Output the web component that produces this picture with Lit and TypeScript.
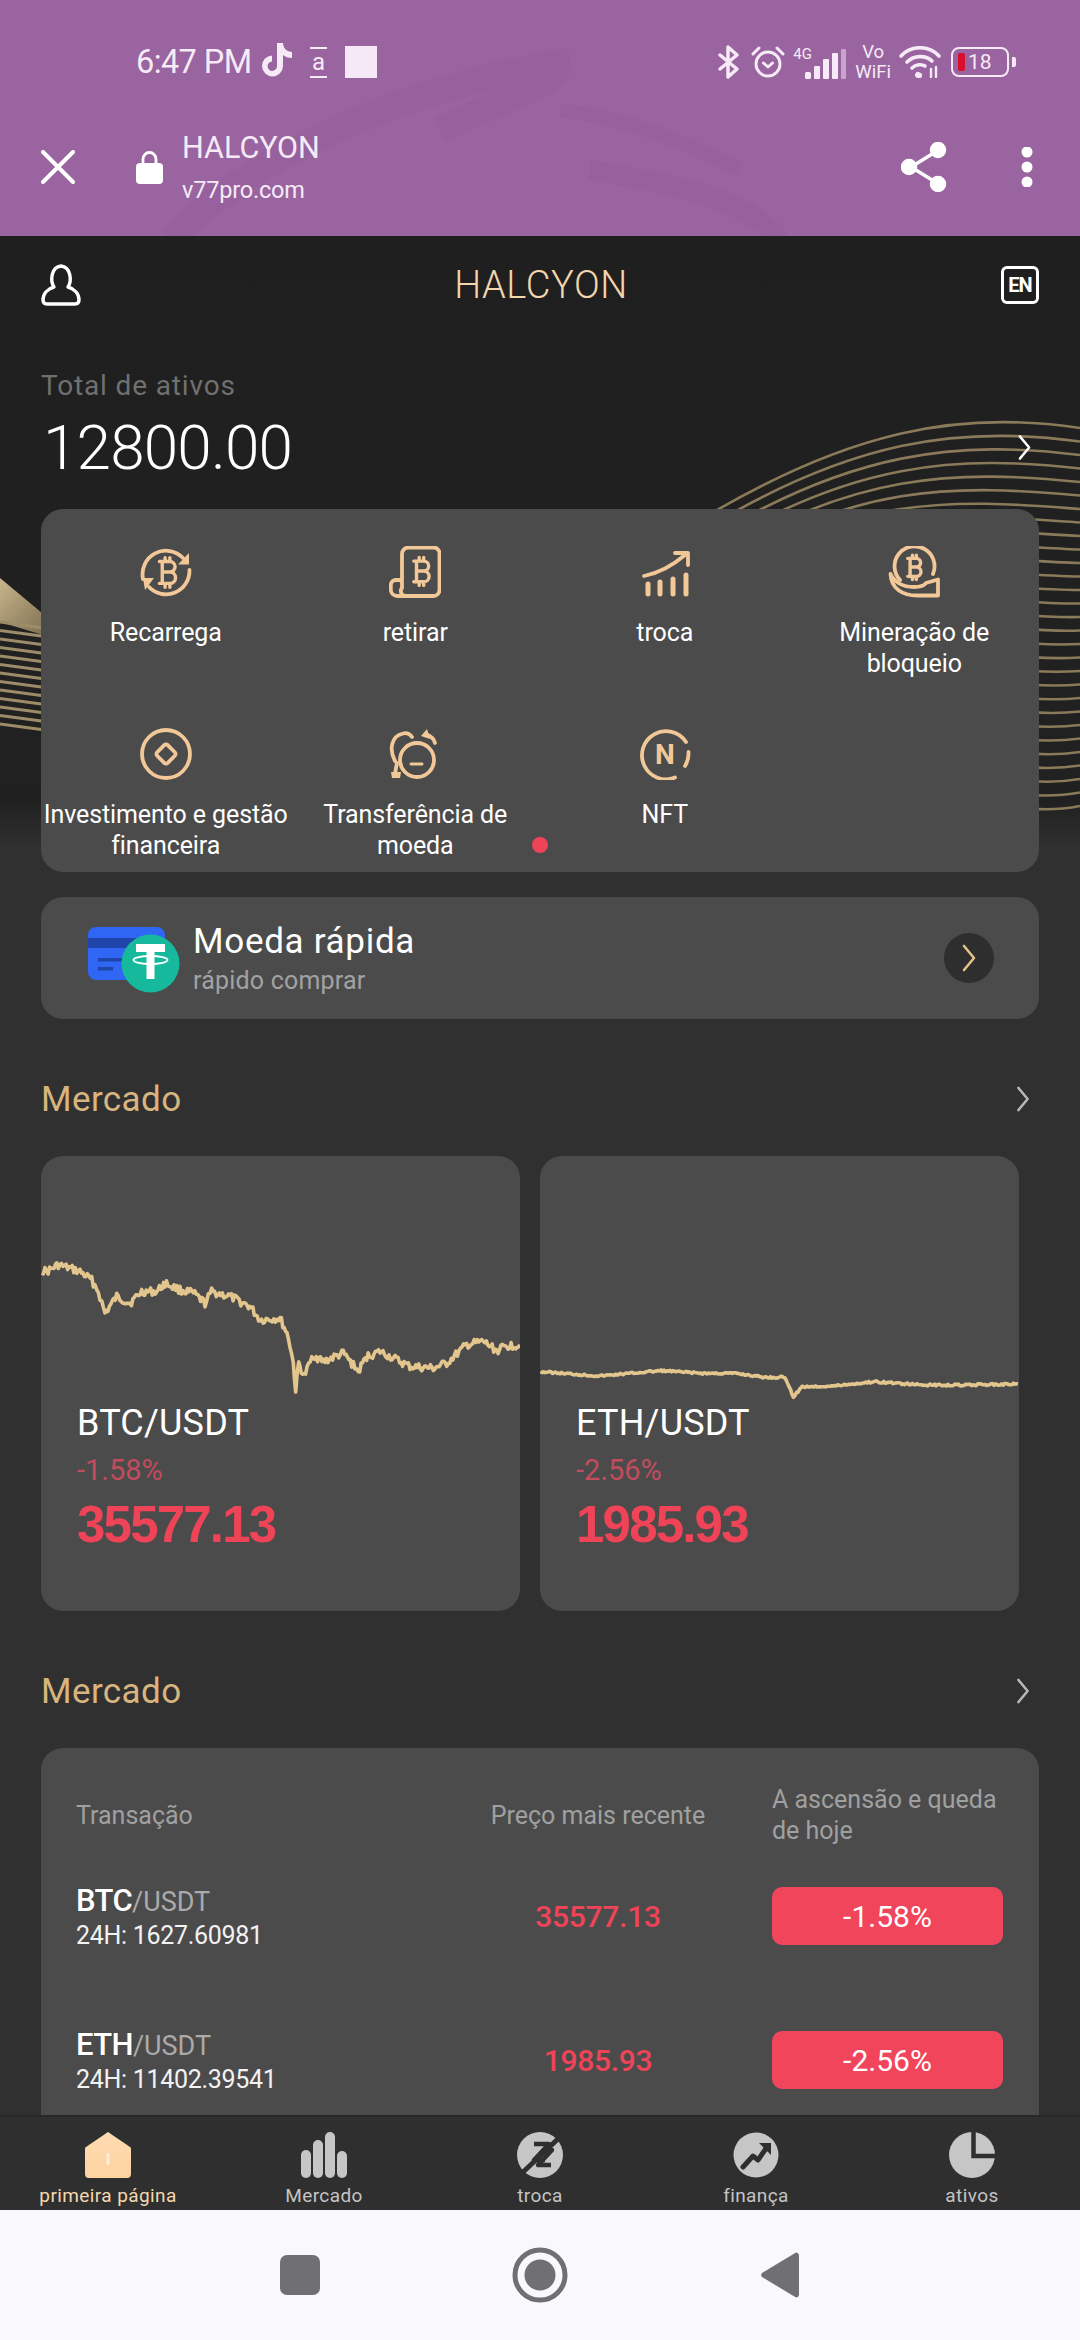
import { LitElement, html, css, svg } from "lit";
import { customElement } from "lit/decorators.js";

const GOLD = "#f2c898";

const btcGlyph = (x: number, y: number, s: number, w = 3.4) => svg`<path transform="translate(${x} ${y}) scale(${s})" fill="none" stroke="${GOLD}" stroke-width="${w / s}" stroke-linecap="round" stroke-linejoin="round" d="M-8 -11H3a5.5 5.5 0 0 1 0 11H-5M3 0a6 6 0 0 1 0 12H-8M-5 -11V12M-2 -15V-11M3 -15V-11M-2 12V16M3 12V16"/>`;

const ic = (body: unknown, size = 52) => html`<svg class="ico" width="${size}" height="${size}" viewBox="0 0 52 52" fill="none" stroke="${GOLD}" stroke-width="3.800" stroke-linecap="round" stroke-linejoin="round">${body}</svg>`;

const ICONS: Record<string, unknown> = {
  recharge: ic(svg`<path d="M43 12A23.5 23.5 0 0 0 3 33"/><path d="M9 41A23.5 23.5 0 0 0 49.500 24"/><path fill="${GOLD}" stroke="none" d="M49 7V18.500H38Z"/><path fill="${GOLD}" stroke="none" d="M3 32H14L5 44Z"/>${btcGlyph(27, 26, 0.95)}`),
  withdraw: ic(svg`<path d="M13 35V8a6.500 6.500 0 0 1 6.500-6.500H44.500A6 6 0 0 1 50.500 8V44a6 6 0 0 1-6 6H8A6.500 6.500 0 0 1 1.800 43.500V39A5 5 0 0 1 7 34H10A3 3 0 0 1 13 37V42a5 5 0 0 0 5 8"/>${btcGlyph(32, 25, 0.9)}`),
  trade: ic(svg`<path d="M5 30C20 27 33 20 46 9"/><path d="M36 7H49V19"/><g stroke-width="5"><path d="M9 38V48"/><path d="M21 36V48"/><path d="M34 33V48"/><path d="M47 29V48"/></g>`),
  mining: ic(svg`<path d="M12 34A20 20 0 1 1 45 28"/><path d="M2.500 28C7 37 15 41 26 41C32 41 36 40 38 37L50 33.500V49.500H31C14 50 3 42 2.500 28Z"/>${btcGlyph(26, 21, 0.78)}`),
  invest: ic(svg`<circle cx="26" cy="26" r="24"/><rect x="18.500" y="18.500" width="15" height="15" rx="2.500" transform="rotate(45 26 26)"/>`),
  transfer: ic(svg`<circle cx="28" cy="32" r="17"/><path d="M22 36H33" stroke-width="3"/><path d="M6 33C0 22 2 8 14 5.500C18 4.500 21 6 23 9"/><path d="M8 35C7 40 6 44 6 48"/><path fill="${GOLD}" stroke="none" d="M2 44H12L11 50H3Z"/><path d="M37 6C42 8 45 11 46 15"/><path fill="${GOLD}" stroke="none" d="M38 1L41 11L32 8Z"/>`),
  nft: html`<svg class="ico" width="52" height="52" viewBox="0 0 52 52" fill="none" stroke="${GOLD}" stroke-width="3.800" stroke-linecap="round"><path d="M36 49.500A24 24 0 1 1 47 14"/><path d="M49.500 24A24 24 0 0 1 46 38"/><text x="26" y="36" text-anchor="middle" font-family="Roboto, sans-serif" font-size="28" font-weight="700" fill="${GOLD}" stroke="none">N</text></svg>`,
};

const GRID = [
  { key: "recharge", label: "Recarrega" },
  { key: "withdraw", label: "retirar" },
  { key: "trade", label: "troca" },
  { key: "mining", label: "Mineração de bloqueio" },
  { key: "invest", label: "Investimento e gestão financeira" },
  { key: "transfer", label: "Transferência de moeda" },
  { key: "nft", label: "NFT" },
];

const BTC_PTS: [number, number][] = [[35,120],[50,125],[85,105],[150,125],[185,150],[205,185],[225,250],[260,200],[300,220],[335,185],[380,185],[405,160],[450,180],[490,190],[525,220],[545,185],[600,200],[660,230],[690,270],[750,265],[775,320],[790,400],[797,482],[806,400],[822,440],[850,375],[880,395],[940,370],[965,400],[985,425],[1010,380],[1050,365],[1100,390],[1140,410],[1210,415],[1250,400],[1310,345],[1360,335],[1400,362],[1430,348],[1470,345]];
const ETH_PTS: [number, number][] = [[785,695],[870,708],[960,692],[1020,700],[1070,700],[1110,712],[1140,712],[1152,770],[1165,740],[1210,738],[1270,725],[1340,735],[1400,735],[1478,732]];

function noisy(pts: [number, number][], amp: number, seed: number) {
  let s = seed;
  const rnd = () => ((s = (s * 9301 + 49297) % 233280) / 233280) - 0.5;
  const out: string[] = [];
  for (let i = 0; i < pts.length - 1; i++) {
    const [x0, y0] = pts[i];
    const [x1, y1] = pts[i + 1];
    const n = Math.max(2, Math.round((x1 - x0) / 1.5));
    for (let k = 0; k < n; k++) {
      const t = k / n;
      out.push(`${(x0 + (x1 - x0) * t).toFixed(1)},${(y0 + (y1 - y0) * t + rnd() * amp).toFixed(1)}`);
    }
  }
  const last = pts[pts.length - 1];
  out.push(`${last[0]},${last[1]}`);
  return out.join(" ");
}

const BTC_LINE = noisy(BTC_PTS.map(([x, y]) => [x / 3 + 30 - 41, y / 3 - 10] as [number, number]), 8, 17);
const ETH_LINE = noisy(ETH_PTS.map(([x, y]) => [x / 1.452 - 540, y / 3 + 1140 - 1240] as [number, number]), 2, 5);

const TILES = [
  { pair: "BTC/USDT", pct: "-1.58%", price: "35577.13", line: BTC_LINE },
  { pair: "ETH/USDT", pct: "-2.56%", price: "1985.93", line: ETH_LINE },
];
const ROWS = [
  { base: "BTC", vol: "24H: 1627.60981", price: "35577.13", pct: "-1.58%" },
  { base: "ETH", vol: "24H: 11402.39541", price: "1985.93", pct: "-2.56%" },
];

const chevron = (color: string, w = 14, h = 28) => html`<svg width="${w}" height="${h}" viewBox="0 0 14 28" fill="none" stroke="${color}" stroke-width="2.600" stroke-linecap="round" stroke-linejoin="round"><path d="M2 2L12 14L2 26"/></svg>`;

const wave = () => {
  const lines = [];
  for (let i = 0; i < 29; i++) {
    lines.push(svg`<path d="M700 ${520 + i * 12}C850 ${430 + i * 10} 960 ${410 + i * 15} 1080 ${428 + i * 13.5}"/>`);
  }
  const left = [];
  for (let i = 0; i < 13; i++) {
    left.push(svg`<path d="M0 ${622 + i * 8.500}L60 ${630 + i * 8.500}"/>`);
  }
  return svg`
    <defs><linearGradient id="wedge" x1="0" y1="0" x2="1" y2="1"><stop offset="0" stop-color="#c9b68a"/><stop offset="1" stop-color="#6e6349"/></linearGradient></defs>
    <g fill="none" stroke="#8a7a5a" stroke-width="2.600">${lines}</g>
    <path d="M0 578L60 628V640L0 622Z" fill="url(#wedge)"/>
    <g fill="none" stroke="#9c8c68" stroke-width="3">${left}</g>`;
};

@customElement("app-root")
export class AppRoot extends LitElement {
  static styles = css`
    :host { display: block; width: 1080px; height: 2340px; overflow: hidden; font-family: Roboto, "Liberation Sans", sans-serif; color: #fff; }
    * { box-sizing: border-box; }
    .screen { width: 1080px; height: 2340px; display: flex; flex-direction: column; position: relative; background: #303030; }
    .chrome { height: 236px; background: #99649f; color: #f6eaf6; flex: none; display: flex; flex-direction: column; position: relative; overflow: hidden; }
    .swoosh { position: absolute; inset: 0; }
    .status { height: 124px; padding: 44px 65px 0 136px; display: flex; align-items: flex-start; justify-content: space-between; position: relative; }
    .st-left, .st-right { display: flex; align-items: center; height: 36px; }
    .time { font-size: 32.500px; letter-spacing: -.6px; width: 126px; white-space: nowrap; }
    .note { width: 48px; }
    .a-box { font-size: 24px; line-height: 25px; border-top: 2px solid #f6eaf6; border-bottom: 2px solid #f6eaf6; height: 31px; width: 17px; display: flex; justify-content: center; align-items: center; margin-right: 18px; }
    .sq { width: 32px; height: 32px; background: #f5e9f6; }
    .st-right svg { display: block; }
    .g4 { font-size: 15px; align-self: flex-start; margin: 2px 0 0 8px; width: 20px; line-height: 16px; }
    .sig { margin-left: -8px; margin-top: 4px; }
    .vo { font-size: 18.500px; font-weight: 400; line-height: 20px; height: 40px; text-align: center; margin: 0 8px; }
    .bat { width: 58px; height: 30px; border: 2.500px solid #f6eaf6; border-radius: 8px; display: flex; align-items: center; padding-left: 5px; font-size: 21px; gap: 3px; position: relative; margin-left: 10px; margin-right: 6px; }
    .bat i { width: 7px; height: 18px; background: #d8102c; border-radius: 2px; }
    .bat::after { content: ""; position: absolute; right: -9px; top: 8px; width: 4px; height: 10px; background: #f6eaf6; border-radius: 0 2px 2px 0; }
    .bar { display: flex; align-items: center; padding: 0 47px 0 41px; height: 90px; position: relative; margin-top: -2px; }
    .lock { margin-left: 61px; margin-right: 19px; }
    .site { flex: 1; display: flex; flex-direction: column; }
    .site b { font-weight: 400; font-size: 30.500px; line-height: 38px; }
    .site span { font-size: 23.500px; line-height: 30px; margin-top: 8px; letter-spacing: -.2px; }
    .share { margin-right: 74px; }

    .content { flex: 1; min-height: 0; overflow: hidden; position: relative; padding: 0 41px; background: linear-gradient(#1f1f1f 0, #212121 540px, #202020 565px, #303030 610px); }
    .deco { position: absolute; left: 0; top: -236px; pointer-events: none; }
    .head { height: 88px; padding-top: 10px; display: flex; align-items: center; justify-content: space-between; position: relative; }
    .head h1 { margin: 0; font-weight: 300; font-size: 38px; color: #f3d6ab; letter-spacing: .6px; }
    .en { width: 38px; height: 38px; border: 3px solid #fff; border-radius: 6px; display: flex; align-items: center; justify-content: center; font-size: 20px; font-weight: 700; letter-spacing: -1px; }
    .total { position: relative; padding-top: 45px; }
    .total small { display: block; font-size: 28px; line-height: 34px; color: #707070; letter-spacing: .85px; }
    .total-row { display: flex; align-items: center; justify-content: space-between; margin-top: 12px; height: 64px; padding-right: 8px; }
    .total-row span { font-size: 62px; font-weight: 300; letter-spacing: -.8px; margin-left: 2px; }

    .panel { position: relative; background: #4b4b4b; border-radius: 22px; }
    .menu { margin-top: 30px; height: 363px; display: grid; grid-template-columns: repeat(4, 1fr); grid-template-rows: 182px 1fr; padding-top: 37px; }
    .cell { display: flex; flex-direction: column; align-items: center; text-align: center; font-size: 25px; line-height: 31px; font-weight: 400; }
    .cell span { margin-top: 19px; padding: 0 1px; width: 100%; letter-spacing: -.1px; }
    .cell .wrap { padding: 0 28px; }
    .ico { display: block; flex: none; }
    .dot { position: absolute; left: 491px; top: 328px; width: 16px; height: 16px; border-radius: 50%; background: #ef4458; }

    .quick { margin-top: 25px; height: 122px; display: flex; align-items: center; padding: 0 45px 0 47px; }
    .quick-art { width: 92px; height: 66px; position: relative; flex: none; margin-top: 3px; }
    .quick-text { flex: 1; margin-left: 13px; }
    .quick-text b { display: block; font-weight: 400; font-size: 35px; line-height: 44px; letter-spacing: .7px; }
    .quick-text span { display: block; font-size: 25px; font-weight: 400; line-height: 30px; color: #a2a2a2; letter-spacing: .2px; margin-top: 2px; }
    .go { width: 50px; height: 50px; border-radius: 50%; background: #2e2e2e; display: flex; align-items: center; justify-content: center; }

    .sec { height: 60px; display: flex; align-items: center; justify-content: space-between; color: #d8b47e; font-size: 35px; font-weight: 400; letter-spacing: .4px; padding-right: 9px; }
    .sec.one { margin-top: 50px; }
    .sec.two { margin-top: 50px; }
    .tiles { display: flex; gap: 20px; margin-top: 27px; }
    .tile { width: 479px; height: 455px; padding-top: 84px; background: #4b4b4b; border-radius: 22px; overflow: hidden; flex: none; }
    .tile svg { display: block; }
    .tile-text { padding: 0 36px; margin-top: 0; }
    .tile-text b { display: block; font-weight: 400; font-size: 36px; line-height: 42px; margin-top: 2px; letter-spacing: .2px; }
    .tile-text i { display: block; font-style: normal; font-size: 29px; font-weight: 400; line-height: 36px; color: #c24c5e; margin-top: 8px; }
    .tile-text strong { display: block; font-family: "Liberation Sans", sans-serif; font-size: 51px; line-height: 58px; font-weight: 700; color: #ef4458; margin-top: 8px; letter-spacing: -1.800px; }

    .table { margin-top: 27px; padding: 25px 35px 40px 35px; }
    .tr { display: grid; grid-template-columns: 396px 300px 231px; align-items: center; }
    .tr > div:nth-child(2) { padding-right: 48px; text-align: center; }
    .th { height: 84px; color: #a0a0a0; font-size: 25px; line-height: 31px; font-weight: 400; }
    .td { height: 72px; margin-top: 72px; }
    .th + .td { margin-top: 23px; }
    .pair { font-size: 31px; line-height: 38px; font-weight: 500; letter-spacing: -.6px; }
    .pair span { font-size: 27px; font-weight: 400; color: #aaa; letter-spacing: 0; }
    .vol { font-size: 25px; line-height: 30px; font-weight: 400; color: #f2f2f2; letter-spacing: -.3px; }
    .px { color: #ef4458; font-size: 30px; font-weight: 500; letter-spacing: -.3px; }
    .pill { height: 58px; border-radius: 10px; background: #f0455a; display: flex; align-items: center; justify-content: center; font-size: 30px; font-weight: 400; }

    .tabs { height: 95px; flex: none; background: #2f2f2f; border-top: 2px solid #272727; display: grid; grid-template-columns: repeat(5, 1fr); padding-top: 14px; position: relative; }
    .tab { display: flex; flex-direction: column; align-items: center; font-size: 19px; font-weight: 400; color: #c4c4c4; letter-spacing: .4px; }
    .tab svg { display: block; }
    .tab span { line-height: 24px; margin-top: 5px; }
    .tab.on { color: #f4d8ae; }
    .sys { height: 130px; flex: none; background: #f9f9fd; display: flex; align-items: center; justify-content: center; }
    .sys div { width: 258px; display: flex; justify-content: center; }
    .sys div.mid { width: 222px; }
  `;

  private tabIcon(i: number) {
    const c = "#c6c6c6";
    const d = "#2f2f2f";
    if (i === 0) return html`<svg width="48" height="48" viewBox="0 0 48 48"><defs><linearGradient id="hm" x1="0" y1="0" x2="0" y2="1"><stop offset="0" stop-color="#ffdcb2"/><stop offset="1" stop-color="#fdd3a0"/></linearGradient></defs><path fill="url(#hm)" d="M24 1L46 16a2 2 0 0 1 1 2V43a4 4 0 0 1-4 4H5a4 4 0 0 1-4-4V18a2 2 0 0 1 1-2Z"/><rect x="22.500" y="22" width="3" height="12" rx="1.500" fill="#ffeeda"/></svg>`;
    if (i === 1) return html`<svg width="48" height="48" viewBox="0 0 48 48" fill="${c}"><rect x="1" y="19" width="10" height="28" rx="5"/><rect x="13" y="9" width="10" height="38" rx="5"/><rect x="25" y="1" width="10" height="46" rx="5"/><rect x="37" y="20" width="10" height="27" rx="5"/></svg>`;
    if (i === 2) return html`<svg width="48" height="48" viewBox="0 0 48 48"><circle cx="24" cy="24" r="23" fill="${c}"/><path d="M4 44L45 5" stroke="${d}" stroke-width="5"/><path d="M18 13H33L18 29H29M29 19L36 19L22 34H35" fill="none" stroke="${d}" stroke-width="4.500" stroke-linejoin="round"/></svg>`;
    if (i === 3) return html`<svg width="48" height="48" viewBox="0 0 48 48"><circle cx="24" cy="24" r="22.500" fill="${c}"/><path d="M11 36L21 25L26 29L35 16" fill="none" stroke="${d}" stroke-width="5" stroke-linecap="round" stroke-linejoin="round"/><path d="M27 12H39V24Z" fill="${d}"/></svg>`;
    return html`<svg width="48" height="48" viewBox="0 0 48 48"><circle cx="24" cy="24" r="23" fill="${c}"/><path d="M24 0V24H48" fill="none" stroke="${d}" stroke-width="4.500" transform="translate(1.500 1)"/></svg>`;
  }

  render() {
    const tabs = ["primeira página", "Mercado", "troca", "finança", "ativos"];
    return html`
      <div class="screen">
        <div class="chrome">
          <svg class="swoosh" width="1080" height="236" viewBox="0 0 1080 236" fill="none" stroke="#96619c" stroke-width="26"><path d="M170 240C260 150 400 90 570 60"/><path d="M440 130C500 100 540 90 560 70"/><path d="M590 170C680 185 750 200 780 240" stroke-width="20"/><path d="M560 110C640 120 700 150 740 170" stroke-width="14"/></svg>
          <div class="status">
            <div class="st-left">
              <span class="time">6:47 PM</span>
              <div class="note"><svg width="30" height="34" viewBox="0 0 30 34" fill="#f6eaf6"><path d="M15 0H21C21 5 25 9 30 9V15C26 15 23.500 14 21 12V23A10.500 10.500 0 1 1 10 12.500V18.500A4.700 4.700 0 1 0 15 23Z"/></svg></div>
              <div class="a-box">a</div>
              <div class="sq"></div>
            </div>
            <div class="st-right">
              <svg width="24" height="34" viewBox="0 0 24 34" fill="none" stroke="#f6eaf6" stroke-width="3.500" stroke-linejoin="round" stroke-linecap="round"><path d="M3 10L20 24L11 32V2L20 10L3 24"/></svg>
              <svg style="margin-left:10px" width="34" height="34" viewBox="0 0 34 34" fill="none" stroke="#f6eaf6" stroke-width="3" stroke-linecap="round" stroke-linejoin="round"><circle cx="17" cy="19" r="12"/><path d="M12.500 18L17 22L21.500 18"/><path d="M2 9L8 3"/><path d="M32 9L26 3"/></svg>
              <span class="g4">4G</span>
              <svg class="sig" width="42" height="32" viewBox="0 0 42 32"><g fill="#f6eaf6"><rect x="0" y="24" width="6" height="7" rx="1.500"/><rect x="9" y="18" width="6" height="13" rx="1"/><rect x="18" y="11" width="6" height="20" rx="1"/><rect x="27" y="5" width="6" height="26" rx="1"/></g><rect x="36" y="1" width="5" height="30" rx="1" fill="#c9a5cd"/></svg>
              <div class="vo">Vo<br />WiFi</div>
              <svg width="42" height="32" viewBox="0 0 42 32" fill="none" stroke="#f6eaf6" stroke-width="3.600" stroke-linecap="round"><path d="M2 10C12 -1 30 -1 40 10"/><path d="M8 16C15 9 27 9 33 15"/><path d="M13 22C17 18 23 18 26 20"/><path d="M19 29L20 29.500" stroke-width="6"/><path d="M32 23V31M37 21V31" stroke-width="2.400"/></svg>
              <div class="bat"><i></i>18</div>
            </div>
          </div>
          <div class="bar">
            <svg width="34" height="34" viewBox="0 0 34 34" fill="none" stroke="#fff" stroke-width="4" stroke-linecap="round"><path d="M2 2L32 32M32 2L2 32"/></svg>
            <svg class="lock" width="27" height="34" viewBox="0 0 27 34"><path d="M7 14V9a6.500 6.500 0 0 1 13 0V14" fill="none" stroke="#fff" stroke-width="2.800"/><rect x="0" y="13" width="27" height="21" rx="4" fill="#fff"/></svg>
            <div class="site"><b>HALCYON</b><span>v77pro.com</span></div>
            <svg class="share" width="46" height="50" viewBox="0 0 46 50" fill="#fff" stroke="#fff" stroke-width="3.500"><path d="M36 9L10 25L36 41" fill="none"/><circle cx="37" cy="8" r="6.500"/><circle cx="8" cy="25" r="6.500"/><circle cx="37" cy="42" r="6.500"/></svg>
            <svg width="12" height="40" viewBox="0 0 12 40" fill="#fff"><circle cx="6" cy="5" r="5.500"/><circle cx="6" cy="20" r="5.500"/><circle cx="6" cy="35" r="5.500"/></svg>
          </div>
        </div>

        <div class="content">
          <svg class="deco" width="1080" height="1000" viewBox="0 0 1080 1000">${wave()}</svg>
          <div class="head">
            <svg width="40" height="42" viewBox="0 0 40 42" fill="none" stroke="#fff" stroke-width="3.400" stroke-linejoin="round"><path d="M13 23C9 17 10 3 20 2C30 3 31 17 27 23C34 25 38 30 38 36C38 39 36 40 34 40H6C4 40 2 39 2 36C2 30 6 25 13 23Z"/></svg>
            <h1>HALCYON</h1>
            <div class="en">EN</div>
          </div>
          <div class="total">
            <small>Total de ativos</small>
            <div class="total-row"><span>12800.00</span>${chevron("#fff", 13, 27)}</div>
          </div>

          <div class="panel menu">
            ${GRID.map((g) => html`<div class="cell">${ICONS[g.key]}<span class="${g.key === "mining" || g.key === "transfer" ? "wrap" : ""}">${g.label}</span></div>`)}
            <div class="dot"></div>
          </div>

          <div class="panel quick">
            <div class="quick-art">
              <svg width="92" height="66" viewBox="0 0 92 66"><rect x="0" y="0" width="77" height="53" rx="8" fill="#2f66f3"/><rect x="0" y="11" width="77" height="10" fill="#1f45ab"/><rect x="10" y="31" width="24" height="3.500" fill="#1f45ab"/><rect x="10" y="40" width="15" height="3.500" fill="#1f45ab"/><circle cx="62.500" cy="36.500" r="29" fill="#16b99b"/><path fill="#fff" d="M48 17H77V25H66.500V52H58.500V25H48Z"/><ellipse cx="62.500" cy="33" rx="17" ry="4" fill="none" stroke="#fff" stroke-width="1.800"/></svg>
            </div>
            <div class="quick-text"><b>Moeda rápida</b><span>rápido comprar</span></div>
            <div class="go">${chevron("#e3c08a", 16, 28)}</div>
          </div>

          <div class="sec one"><span>Mercado</span>${chevron("#b9b9b9", 14, 26)}</div>
          <div class="tiles">
            ${TILES.map((t) => html`<div class="tile">
              <svg width="479" height="160" viewBox="0 0 479 160"><polyline points="${t.line}" fill="none" stroke="#e2c68e" stroke-width="3.600" stroke-linejoin="round"/></svg>
              <div class="tile-text"><b>${t.pair}</b><i>${t.pct}</i><strong>${t.price}</strong></div>
            </div>`)}
          </div>

          <div class="sec two"><span>Mercado</span>${chevron("#b9b9b9", 14, 26)}</div>
          <div class="panel table">
            <div class="tr th"><div>Transação</div><div>Preço mais recente</div><div>A ascensão e queda de hoje</div></div>
            ${ROWS.map((r) => html`<div class="tr td">
              <div><div class="pair">${r.base}<span>/USDT</span></div><div class="vol">${r.vol}</div></div>
              <div class="px">${r.price}</div>
              <div class="pill">${r.pct}</div>
            </div>`)}
          </div>
        </div>

        <div class="tabs">
          ${tabs.map((t, i) => html`<div class="tab ${i === 0 ? "on" : ""}">${this.tabIcon(i)}<span>${t}</span></div>`)}
        </div>
        <div class="sys">
          <div><svg width="40" height="40" viewBox="0 0 40 40"><rect width="40" height="40" rx="7" fill="#6f6f74"/></svg></div>
          <div class="mid"><svg width="56" height="56" viewBox="0 0 56 56"><circle cx="28" cy="28" r="25" fill="none" stroke="#6f6f74" stroke-width="5"/><circle cx="28" cy="28" r="15.500" fill="#6f6f74"/></svg></div>
          <div><svg width="38" height="46" viewBox="0 0 38 46"><path d="M35 0.500a3 3 0 0 1 3 2.500V43a3 3 0 0 1-3 2.500L1 25a3 3 0 0 1 0-4Z" fill="#6f6f74"/></svg></div>
        </div>
      </div>
    `;
  }
}
